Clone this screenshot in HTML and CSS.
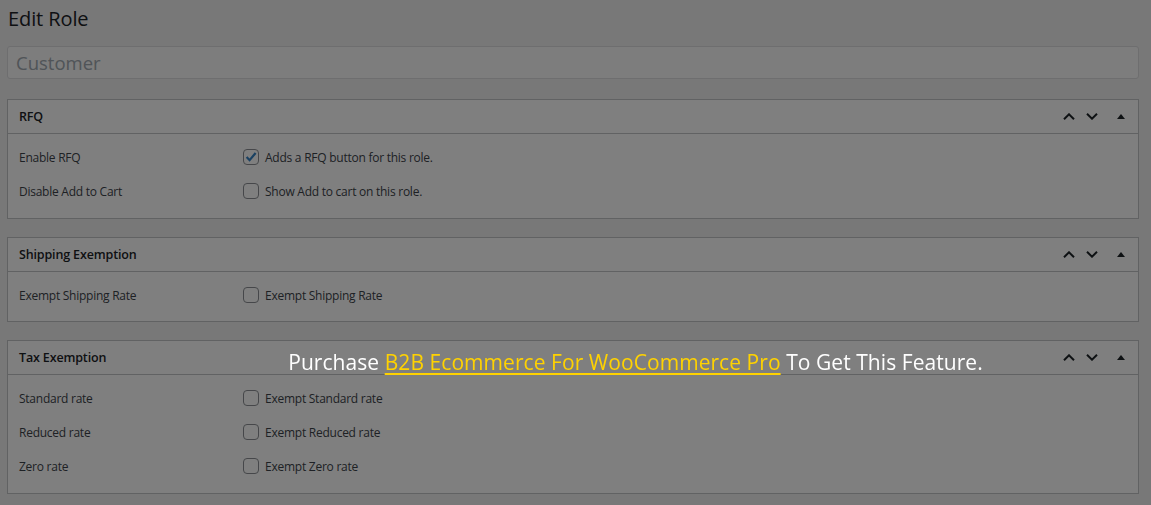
FILE: index.html
```html
<!DOCTYPE html>
<html lang="en">
<head>
<meta charset="utf-8">
<title>Edit Role</title>
<link rel="stylesheet" href="styles.css">
</head>
<body>
<div class="page">
  <h1 class="page-title">Edit Role</h1>
  <input class="role-name" type="text" value="Customer" readonly>

  <div class="postbox">
    <div class="postbox-header">
      <h2 class="hndle">RFQ</h2>
      <div class="handle-actions">
        <span class="hbtn up"><svg width="12" height="7" viewBox="0 0 12 7"><path d="M1 6.2 L6 1.3 L11 6.2" fill="none" stroke="#1d2327" stroke-width="2"/></svg></span>
        <span class="hbtn down"><svg width="12" height="7" viewBox="0 0 12 7"><path d="M1 0.8 L6 5.7 L11 0.8" fill="none" stroke="#1d2327" stroke-width="2"/></svg></span>
        <span class="hbtn toggle"><svg width="8" height="5" viewBox="0 0 8 5"><path d="M0 5 L4 0 L8 5 Z" fill="#1d2327"/></svg></span>
      </div>
    </div>
    <div class="inside">
      <div class="row"><div class="label">Enable RFQ</div><label class="field"><span class="cb checked"><svg width="14" height="14" viewBox="0 0 14 14"><path d="M2.6 7 L5.6 10.2 L11.6 3" fill="none" stroke="#3582c4" stroke-width="2.2"/></svg></span>Adds a RFQ button for this role.</label></div>
      <div class="row"><div class="label">Disable Add to Cart</div><label class="field"><span class="cb"></span>Show Add to cart on this role.</label></div>
    </div>
  </div>

  <div class="postbox">
    <div class="postbox-header">
      <h2 class="hndle">Shipping Exemption</h2>
      <div class="handle-actions">
        <span class="hbtn up"><svg width="12" height="7" viewBox="0 0 12 7"><path d="M1 6.2 L6 1.3 L11 6.2" fill="none" stroke="#1d2327" stroke-width="2"/></svg></span>
        <span class="hbtn down"><svg width="12" height="7" viewBox="0 0 12 7"><path d="M1 0.8 L6 5.7 L11 0.8" fill="none" stroke="#1d2327" stroke-width="2"/></svg></span>
        <span class="hbtn toggle"><svg width="8" height="5" viewBox="0 0 8 5"><path d="M0 5 L4 0 L8 5 Z" fill="#1d2327"/></svg></span>
      </div>
    </div>
    <div class="inside inside-tight">
      <div class="row"><div class="label">Exempt Shipping Rate</div><label class="field"><span class="cb"></span>Exempt Shipping Rate</label></div>
    </div>
  </div>

  <div class="postbox">
    <div class="postbox-header">
      <h2 class="hndle">Tax Exemption</h2>
      <div class="handle-actions">
        <span class="hbtn up"><svg width="12" height="7" viewBox="0 0 12 7"><path d="M1 6.2 L6 1.3 L11 6.2" fill="none" stroke="#1d2327" stroke-width="2"/></svg></span>
        <span class="hbtn down"><svg width="12" height="7" viewBox="0 0 12 7"><path d="M1 0.8 L6 5.7 L11 0.8" fill="none" stroke="#1d2327" stroke-width="2"/></svg></span>
        <span class="hbtn toggle"><svg width="8" height="5" viewBox="0 0 8 5"><path d="M0 5 L4 0 L8 5 Z" fill="#1d2327"/></svg></span>
      </div>
    </div>
    <div class="inside">
      <div class="row"><div class="label">Standard rate</div><label class="field"><span class="cb"></span>Exempt Standard rate</label></div>
      <div class="row"><div class="label">Reduced rate</div><label class="field"><span class="cb"></span>Exempt Reduced rate</label></div>
      <div class="row"><div class="label">Zero rate</div><label class="field"><span class="cb"></span>Exempt Zero rate</label></div>
    </div>
  </div>
</div>

<div class="overlay">
  <p class="promo">Purchase <a href="#">B2B Ecommerce For WooCommerce Pro</a> To Get This Feature.</p>
</div>
</body>
</html>
```

FILE: styles.css
```css
* { box-sizing: border-box; }
html, body { margin: 0; padding: 0; }
body {
  background: #f0f0f1;
  font-family: "Open Sans", "Noto Sans", sans-serif;
  color: #3c434a;
  font-size: 12px;
  letter-spacing: -0.25px;
}
.page {
  padding: 0 12px 0 7px;
}
.page-title {
  margin: 0;
  padding: 4px 0 0 1px;
  font-size: 20px;
  font-weight: 400;
  line-height: 30px;
  letter-spacing: -0.1px;
  color: #1d2327;
}
.role-name {
  display: block;
  width: 100%;
  height: 33px;
  margin: 12px 0 20px;
  padding: 0 8px;
  border: 1px solid #dcdcde;
  border-radius: 3px;
  background: #fafafa;
  font-family: inherit;
  font-size: 18.5px;
  letter-spacing: 0;
  color: #a0a8b0;
  outline: none;
}
.postbox {
  background: #fff;
  border: 1px solid #c3c4c7;
  margin-bottom: 18px;
}
.postbox:last-child {
  margin-bottom: 0;
}
.postbox-header {
  display: flex;
  align-items: center;
  justify-content: space-between;
  height: 34px;
  border-bottom: 1px solid #c3c4c7;
  padding-left: 11px;
}
.hndle {
  margin: 0;
  font-size: 12.5px;
  font-weight: 600;
  letter-spacing: -0.15px;
  color: #1d2327;
}
.handle-actions {
  display: flex;
  align-items: center;
  height: 100%;
}
.hbtn {
  display: flex;
  align-items: center;
  justify-content: center;
  height: 100%;
}
.hbtn.up, .hbtn.down { width: 23px; }
.hbtn.toggle { width: 35px; }
.hbtn svg { display: block; }
.inside {
  padding: 6px 11px 10px;
}
.inside-tight {
  padding-bottom: 9px;
}
.row {
  display: flex;
  align-items: center;
  height: 34px;
}
.label {
  width: 224px;
  flex: none;
}
.field {
  display: flex;
  align-items: center;
  gap: 6px;
}
.cb {
  width: 16px;
  height: 16px;
  border: 1px solid #8c8f94;
  border-radius: 4px;
  background: #fff;
  display: flex;
  align-items: center;
  justify-content: center;
  flex: none;
}
.cb svg { display: block; }
.overlay {
  position: fixed;
  inset: 0;
  background: rgba(0, 0, 0, 0.5);
}
.promo {
  position: absolute;
  top: 347px;
  left: 0;
  right: 0;
  margin: 0;
  padding-left: 120px;
  text-align: center;
  font-size: 21px;
  line-height: 30px;
  letter-spacing: 0.06px;
  color: #fff;
}
.promo a {
  color: #ffd200;
  text-decoration: underline;
  text-decoration-thickness: 2px;
  text-underline-offset: 3px;
}
```
